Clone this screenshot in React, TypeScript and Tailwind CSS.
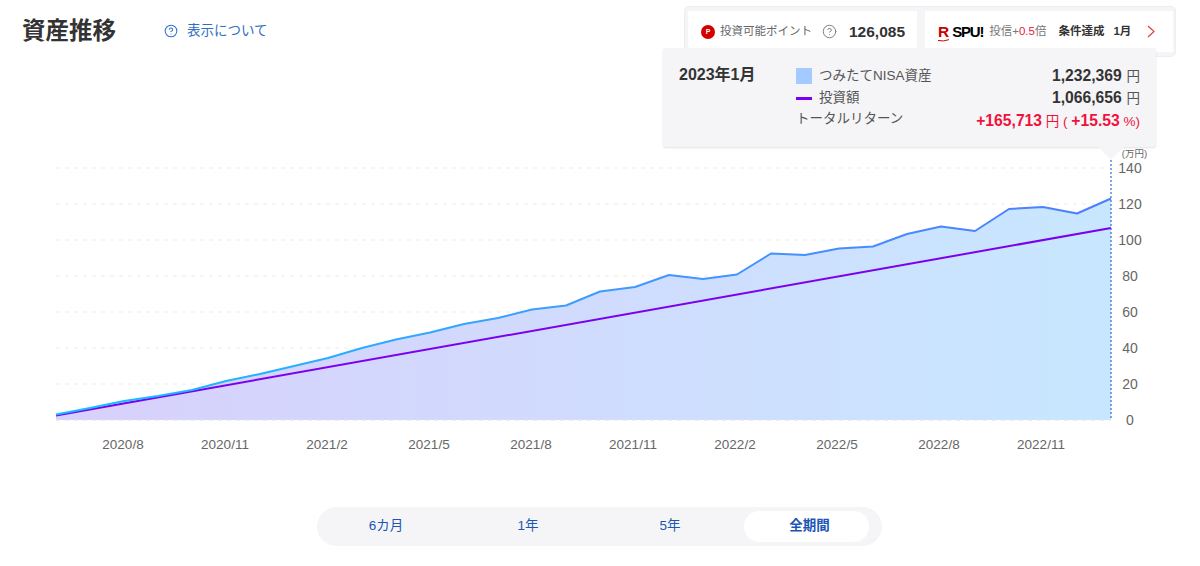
import { HelpCircle } from "lucide-react";

const blue: [number, number][] = [
  [56, 414.5], [90, 408], [124, 401], [158, 396], [192, 390], [226, 381], [260, 374], [294, 366],
  [328, 358], [362, 348], [396, 339.5], [430, 332.5], [464, 324], [498, 318], [532, 309.5], [566, 305.5],
  [600, 291.5], [635, 287], [669, 275], [703, 279], [737, 274.5], [771, 253.5], [805, 255], [839, 248.5],
  [873, 246.5], [907, 234], [941, 226.5], [975, 231], [1009, 209], [1043, 207], [1077, 213.5], [1111, 198.5],
];
const linePoints = blue.map(([x, y]) => `${x},${y}`).join(" ");
const gridLines = [168, 204, 240, 276, 312, 348, 384, 420];
const yLabels = ["140", "120", "100", "80", "60", "40", "20", "0"];
const xLabels: [number, string][] = [
  [123, "2020/8"], [225, "2020/11"], [327, "2021/2"], [429, "2021/5"], [531, "2021/8"], [633, "2021/11"],
  [735, "2022/2"], [837, "2022/5"], [939, "2022/8"], [1041, "2022/11"],
];
const ranges = ["6カ月", "1年", "5年", "全期間"];

function Chart() {
  return (
    <svg width="1200" height="340" viewBox="0 130 1200 340" className="block">
      <defs>
        <linearGradient id="fill" gradientUnits="userSpaceOnUse" x1="56" y1="0" x2="1111" y2="0">
          <stop offset="0" stopColor="#d8d0fc" />
          <stop offset="1" stopColor="#c8e7ff" />
        </linearGradient>
        <linearGradient id="stroke" gradientUnits="userSpaceOnUse" x1="56" y1="0" x2="1111" y2="0">
          <stop offset="0" stopColor="#12c0ff" />
          <stop offset="0.5" stopColor="#3f9cff" />
          <stop offset="1" stopColor="#4d7dff" />
        </linearGradient>
      </defs>
      {gridLines.map((y) => (
        <line key={y} x1="56" x2="1111" y1={y} y2={y} stroke="#ebebeb" strokeDasharray="4 5" />
      ))}
      <polygon points={`56,420 ${linePoints} 1111,420`} fill="url(#fill)" />
      <line x1="56" x2="1111" y1="420" y2="420" stroke="#e4e4ee" strokeDasharray="4 5" />
      <line x1="56" y1="415.5" x2="1111" y2="228" stroke="#7b00f0" strokeWidth="2" />
      <polyline points={linePoints} fill="none" stroke="url(#stroke)" strokeWidth="2" strokeLinejoin="round" />
      <line x1="1111" y1="160" x2="1111" y2="420" stroke="#2f6fd0" strokeWidth="1.2" strokeDasharray="2 2" />
      <text x="1134.5" y="157" textAnchor="middle" fontSize="9.5" fill="#666">(万円)</text>
      {yLabels.map((label, i) => (
        <text key={label} x="1130" y={gridLines[i] + 5} textAnchor="middle" fontSize="14" fill="#666">
          {label}
        </text>
      ))}
      {xLabels.map(([x, label]) => (
        <text key={label} x={x} y="449" textAnchor="middle" fontSize="13.5" fill="#666">
          {label}
        </text>
      ))}
    </svg>
  );
}

export default function App() {
  return (
    <div className="relative h-[566px] w-[1200px] overflow-hidden bg-white font-['Liberation_Sans','Noto_Sans_CJK_JP',sans-serif] text-[#333]">
      <header className="flex h-[130px] items-start justify-between pl-[22px] pr-[24px] pt-[6px]">
        <div className="flex items-center pt-[9px]">
          <h1 className="w-[142px] text-[23.5px] font-bold leading-[32px] text-[#333]">資産推移</h1>
          <HelpCircle className="mr-[9px] h-[14px] w-[14px] text-[#2f6fd0]" strokeWidth={1.75} />
          <span className="text-[13.5px] text-[#2f6fc0]">表示について</span>
        </div>
        <div className="flex h-[51px] w-[492px] gap-[8px] rounded-[5px] border border-[#eeeef2] bg-[#f5f5f7] pl-[3px] pt-[4px]">
          <div className="flex h-[41px] w-[229px] items-center bg-white pl-[13px]">
            <span className="flex h-[14px] w-[14px] items-center justify-center rounded-full bg-[#d40000] text-[7px] font-bold leading-none text-white">
              P
            </span>
            <span className="ml-[5px] text-[11.5px] text-[#666]">投資可能ポイント</span>
            <HelpCircle className="ml-[10px] h-[15px] w-[15px] text-[#777]" strokeWidth={1.5} />
            <span className="ml-[12px] text-[15.5px] font-bold text-[#333]">126,085</span>
          </div>
          <div className="flex h-[41px] w-[248px] items-center bg-white pl-[13px]">
            <span className="relative text-[15.5px] font-bold leading-none text-[#c90000]">
              R
              <svg viewBox="0 0 12 3" className="absolute left-0 top-[15px] h-[3px] w-[12px]">
                <path d="M0 1.5 Q6 2.8 11 0.6" stroke="#d40000" strokeWidth="1" fill="none" />
              </svg>
            </span>
            <span className="ml-[3px] text-[15px] font-bold leading-none tracking-[-1.2px] text-black">SPU!</span>
            <span className="ml-[6px] text-[11.5px] text-[#777]">
              投信+<span className="text-[#e8203a]">0.5</span>倍
            </span>
            <span className="ml-[12px] text-[11.5px] font-bold text-[#333]">条件達成</span>
            <span className="ml-[9px] text-[11.5px] font-bold text-[#333]">1月</span>
            <svg viewBox="0 0 8 12" className="ml-[16px] h-[13px] w-[8px]">
              <path d="M1 0.5 L7 6 L1 11.5" stroke="#e0403f" strokeWidth="1.2" fill="none" />
            </svg>
          </div>
        </div>
      </header>

      <Chart />

      <div className="mt-[37px] flex justify-center pr-[2px]">
        <div className="flex h-[39px] w-[565px] items-center rounded-full bg-[#f5f5f7] pl-[1px] pr-[11px]">
          {ranges.map((range) => (
            <button
              key={range}
              className={
                range === "全期間"
                  ? "h-[31px] w-[125px] rounded-full bg-white pl-[7px] text-[13.5px] font-bold text-[#1c56b4]"
                  : "h-[31px] w-[142px] pr-[5px] text-[13.5px] text-[#1c56b4]"
              }
            >
              {range}
            </button>
          ))}
        </div>
      </div>

      <div className="absolute left-[663px] top-[48px] flex h-[99px] w-[493px] rounded-[3px] bg-[#f5f5f7] pl-[16px] pr-[16px] pt-[17px] shadow-[0_1px_2px_rgba(0,0,0,0.12)]">
        <div className="w-[117px] text-[16px] font-bold leading-[20px] text-[#333]">2023年1月</div>
        <div className="flex-1 text-[13.5px] text-[#555]">
          <div className="flex h-[22px] items-center justify-between">
            <span className="flex items-center">
              <span className="mr-[7px] h-[16px] w-[16px] bg-[#a3cbff]" />
              つみたてNISA資産
            </span>
            <span>
              <b className="mr-[1px] text-[15.7px] text-[#333]">1,232,369</b> 円
            </span>
          </div>
          <div className="flex h-[22px] items-center justify-between">
            <span className="flex items-center">
              <span className="mr-[7px] h-[3px] w-[16px] bg-[#7b00f0]" />
              投資額
            </span>
            <span>
              <b className="mr-[1px] text-[15.7px] text-[#333]">1,066,656</b> 円
            </span>
          </div>
          <div className="flex h-[24px] items-center justify-between">
            <span className="-mt-[3px]">トータルリターン</span>
            <span className="text-[#f0123c]">
              <b className="text-[15.7px]">+165,713</b> 円 ( <b className="text-[15.7px]">+15.53</b> %)
            </span>
          </div>
        </div>
        <span className="absolute left-[435px] top-[99px] h-0 w-0 border-x-[13px] border-t-[13px] border-x-transparent border-t-[#f5f5f7]" />
      </div>
    </div>
  );
}
